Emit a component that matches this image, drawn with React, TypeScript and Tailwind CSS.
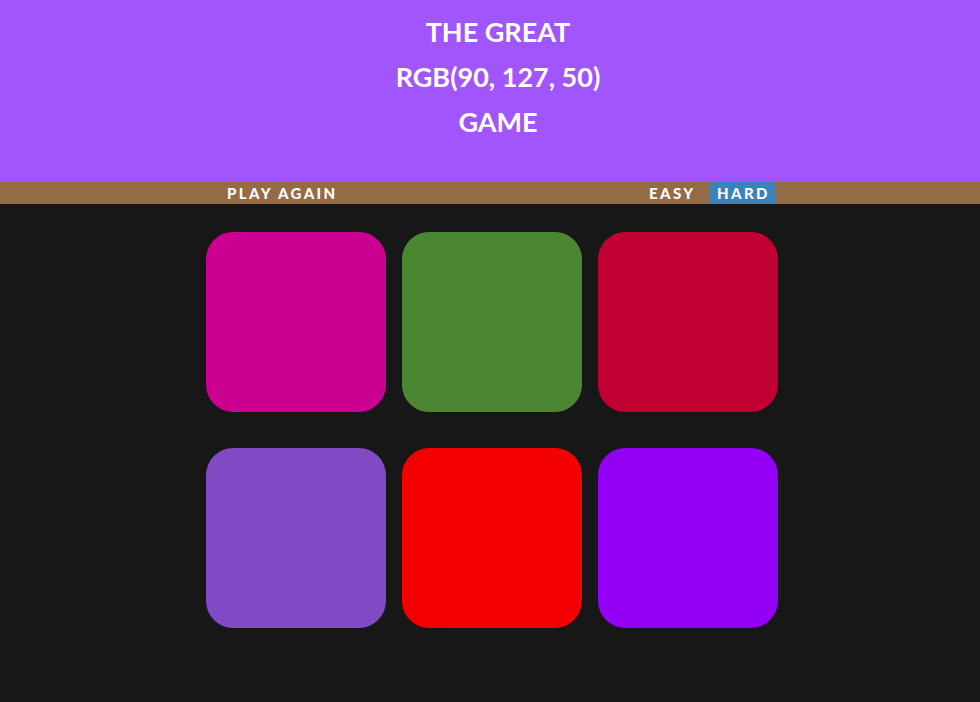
export default function App() {
  const colors = [
    "#cc0090",
    "#4b8632",
    "#c10032",
    "#804ac4",
    "#f50000",
    "#9300f4",
  ];

  return (
    <div className="min-h-[702px] bg-[#171717] font-['Lato',sans-serif]">
      <header className="flex h-[182px] flex-col items-center bg-[#a155fc] pl-[16px] pt-[9px] text-[27px] font-bold leading-[45px] text-white">
        <span>THE GREAT</span>
        <span>RGB(90, 127, 50)</span>
        <span>GAME</span>
      </header>

      <nav className="flex h-[22px] items-stretch bg-[#936c45] text-[15px] font-black tracking-[2.4px] text-white">
        <div className="flex w-[649px] items-center pl-[227px]">
          <button>PLAY AGAIN</button>
        </div>
        <div className="flex items-stretch">
          <button className="w-[60px] text-left">EASY</button>
          <button className="w-[67px] bg-[#3a82b9] pl-[8px] text-left">HARD</button>
        </div>
      </nav>

      <main className="grid grid-cols-[180px_180px_180px] gap-x-[16px] gap-y-[36px] pl-[206px] pt-[28px]">
        {colors.map((c) => (
          <div
            key={c}
            className="h-[180px] w-[180px] rounded-[27px]"
            style={{ backgroundColor: c }}
          />
        ))}
      </main>
    </div>
  );
}
